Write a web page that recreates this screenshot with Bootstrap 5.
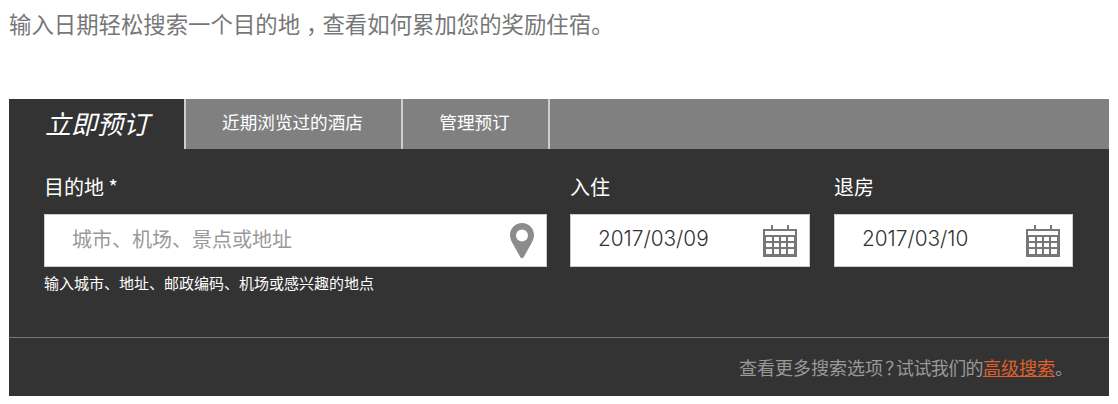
<!DOCTYPE html>
<html lang="zh-CN">
<head>
<meta charset="utf-8">
<title>预订</title>
<link href="https://cdn.jsdelivr.net/npm/bootstrap@5.3.0/dist/css/bootstrap.min.css" rel="stylesheet">
<style>
html,body{background:#fff;overflow:hidden}
body{font-family:"Noto Sans CJK SC","Liberation Sans",sans-serif;padding:0 9px}
.intro-text{font-size:22.4px;line-height:30px;color:#777;padding-top:8px;height:99px;margin:0}
.mid-punct{padding-left:6px;letter-spacing:-6px}
.booking-panel{background:#333;height:297px;color:#fff}
.tab-strip{height:50px;background:#808080}
.tab-item{color:#fff;text-decoration:none;font-size:17.6px;display:flex;align-items:center;justify-content:center;border-right:2px solid #ccc;height:50px;padding:0 2px 3px 0}
.tab-item:hover{color:#fff}
.tab-active{background:#333;width:177px;font-size:26px;font-style:italic;padding:0 0 3px 1px}
.tab-recent{width:217px}
.tab-manage{width:147px}
.form-zone{padding:24px 36px 0 35px;height:188px}
.field-dest{width:503px;margin-right:23px}
.field-date{width:240px;margin-right:24px}
.field-out{width:239px}
.field-label{font-size:20px;line-height:28px;margin:0 0 13px;display:block;font-weight:400}
.input-shell{background:#fff;border:1px solid #ccc;height:53px;padding:0 12px 0 27px;color:#444}
.place-hold{color:#999;font-size:20px;padding-bottom:4px}
.date-val{font-family:Inter,"Liberation Sans",sans-serif;font-size:20.8px;color:#333;font-weight:300;padding-bottom:4px}
.field-help{font-size:15px;line-height:18px;margin:7px 0 0}
.panel-foot{border-top:1px solid #777;height:59px;color:#999;font-size:18px;padding-right:36px}
.panel-foot a{color:#e0602a}
.tight-mark{letter-spacing:-7px;padding-left:2px}
.tight-run{letter-spacing:-.6px}
</style>
</head>
<body>
<p class="intro-text">输入日期轻松搜索一个目的地<span class="mid-punct">，</span>查看如何累加您的奖励住宿。</p>
<div class="booking-panel d-flex flex-column">
  <nav class="tab-strip d-flex">
    <a class="tab-item tab-active" href="#">立即预订</a>
    <a class="tab-item tab-recent" href="#">近期浏览过的酒店</a>
    <a class="tab-item tab-manage" href="#">管理预订</a>
  </nav>
  <div class="form-zone d-flex">
    <div class="field-dest">
      <label class="field-label">目的地 *</label>
      <div class="input-shell d-flex align-items-center justify-content-between">
        <span class="place-hold">城市、机场、景点或地址</span>
        <svg width="24" height="36" viewBox="0 0 24 36" aria-hidden="true"><path fill="#8c8c8c" fill-rule="evenodd" d="M12 0C5.4 0 0 5.3 0 11.900c0 3 1 5.300 2.400 8.200L10.200 34c.9 1.700 2.700 1.700 3.600 0l7.800-13.900c1.400-2.900 2.400-5.200 2.400-8.200C24 5.300 18.600 0 12 0zm0 6.500a6 6 0 1 1 0 12 6 6 0 0 1 0-12z"/></svg>
      </div>
      <p class="field-help">输入城市、地址、邮政编码、机场或感兴趣的地点</p>
    </div>
    <div class="field-date">
      <label class="field-label">入住</label>
      <div class="input-shell d-flex align-items-center justify-content-between">
        <span class="date-val">2017/03/09</span>
        <svg width="34" height="32" viewBox="0 0 34 32" aria-hidden="true"><path fill="#777" fill-rule="evenodd" d="M8 0h2v4h14V0h2v4h8v28H0V4h8zM2 6v4h30V6zm1 6v4h6v-4zm8 0v4h5v-4zm7 0v4h5v-4zm7 0v4h6v-4zM3 18v4h6v-4zm8 0v4h5v-4zm7 0v4h5v-4zm7 0v4h6v-4zM3 24v5h6v-5zm8 0v5h5v-5zm7 0v5h5v-5zm7 0v5h6v-5z"/></svg>
      </div>
    </div>
    <div class="field-out">
      <label class="field-label">退房</label>
      <div class="input-shell d-flex align-items-center justify-content-between">
        <span class="date-val">2017/03/10</span>
        <svg width="34" height="32" viewBox="0 0 34 32" aria-hidden="true"><path fill="#777" fill-rule="evenodd" d="M8 0h2v4h14V0h2v4h8v28H0V4h8zM2 6v4h30V6zm1 6v4h6v-4zm8 0v4h5v-4zm7 0v4h5v-4zm7 0v4h6v-4zM3 18v4h6v-4zm8 0v4h5v-4zm7 0v4h5v-4zm7 0v4h6v-4zM3 24v5h6v-5zm8 0v5h5v-5zm7 0v5h5v-5zm7 0v5h6v-5z"/></svg>
      </div>
    </div>
  </div>
  <div class="panel-foot d-flex align-items-center justify-content-end">
    <span>查看更多搜索选项<span class="tight-mark">？</span><span class="tight-run">试试我们的</span><a href="#">高级搜索</a>。</span>
  </div>
</div>
<script src="https://cdn.jsdelivr.net/npm/bootstrap@5.3.0/dist/js/bootstrap.bundle.min.js"></script>
</body>
</html>
